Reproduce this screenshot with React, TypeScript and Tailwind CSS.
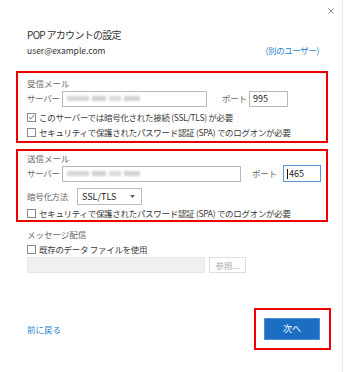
import { X } from "lucide-react";

const font = { fontFamily: '"Noto Sans CJK JP", "Noto Sans", sans-serif' };

const Check = ({ checked = false, label }: { checked?: boolean; label: string }) => (
  <div className="flex items-center h-[14px] gap-[3px]">
    <span className="w-[9px] h-[9px] border border-[#8a8a8a] bg-white flex items-center justify-center shrink-0">
      {checked && (
        <svg viewBox="0 0 10 10" className="w-[8px] h-[8px]">
          <path d="M1.5 5.2 L4 7.6 L8.6 2.2" fill="none" stroke="#444" strokeWidth="1.1" />
        </svg>
      )}
    </span>
    <span className="text-[8.5px] text-[#3a3a3a] tracking-[-0.3px] whitespace-nowrap">{label}</span>
  </div>
);

// blurred placeholder for the hidden server name
const Blurred = () => (
  <div className="flex items-center gap-[3px] h-full pl-[4px] blur-[0.8px]">
    <span className="w-[22px] h-[5px] bg-[#d6d6d6]" />
    <span className="w-[14px] h-[5px] bg-[#cfcfcf]" />
    <span className="w-[12px] h-[5px] bg-[#d9d9d9]" />
    <span className="w-[16px] h-[5px] bg-[#d2d2d2]" />
  </div>
);

const Label = ({ w, ml = "", children }: { w: string; ml?: string; children: string }) => (
  <span className={`${w} ${ml} shrink-0 whitespace-nowrap text-[8.5px] text-[#666] tracking-[-0.3px]`}>{children}</span>
);

export default function App() {
  return (
    <div className="w-[350px] h-[372px] bg-white flex" style={font}>
      <div className="w-[343px] h-full border-r border-[#ececec] flex flex-col">
        <div className="h-[20px] flex justify-end items-center pr-[6px] pt-[1px]">
          <X className="w-[10px] h-[10px] text-[#555]" strokeWidth={1.5} />
        </div>

        <div className="mt-[7px] pl-[27px] h-[16px] leading-[16px] text-[10px] text-[#333] tracking-[-0.7px]">
          POP アカウントの設定
        </div>
        <div className="flex justify-between items-center h-[14px] pl-[27px] pr-[23px]">
          <span className="text-[8.5px] text-[#333]">user@example.com</span>
          <span className="text-[8.5px] text-[#2a7fd0] tracking-[-0.4px]">(別のユーザー)</span>
        </div>

        {/* incoming */}
        <div className="mt-[14px] ml-[16px] w-[312px] border-2 border-[#ee0000] pl-[9px] pt-[3px] pb-[2px]">
          <div className="h-[14px] leading-[14px] text-[8.5px] text-[#666]">受信メール</div>
          <div className="flex items-center h-[17px]">
            <Label w="w-[35px]">サーバー</Label>
            <div className="w-[145px] h-[16px] shrink-0 border border-[#b8b8b8]">
              <Blurred />
            </div>
            <Label w="w-[27px]" ml="ml-[15px]">ポート</Label>
            <div className="w-[39px] h-[16px] shrink-0 border border-[#b8b8b8] text-[9px] text-[#222] pl-[3px] leading-[14px]">
              995
            </div>
          </div>
          <div className="mt-[3px]">
            <Check checked label="このサーバーでは暗号化された接続 (SSL/TLS) が必要" />
          </div>
          <div className="mt-[1px]">
            <Check label="セキュリティで保護されたパスワード認証 (SPA) でのログオンが必要" />
          </div>
        </div>

        {/* outgoing */}
        <div className="mt-[6px] ml-[16px] w-[312px] border-2 border-[#ee0000] pl-[9px]">
          <div className="h-[14px] leading-[14px] text-[8.5px] text-[#666]">送信メール</div>
          <div className="flex items-center h-[17px]">
            <Label w="w-[35px]">サーバー</Label>
            <div className="w-[179px] h-[16px] shrink-0 border border-[#b8b8b8]">
              <Blurred />
            </div>
            <Label w="w-[31px]" ml="ml-[11px]">ポート</Label>
            <div className="w-[38px] h-[17px] shrink-0 border border-[#5b9bd5] text-[9px] text-[#222] pl-[3px] flex items-center">
              <span className="w-px h-[10px] bg-[#111] mr-[1px]" />
              465
            </div>
          </div>
          <div className="mt-[6px] flex items-center h-[17px]">
            <Label w="w-[50px]">暗号化方法</Label>
            <div className="w-[65px] h-[17px] shrink-0 border border-[#bcbcbc] flex items-center justify-between pl-[4px] pr-[6px]">
              <span className="text-[9px] text-[#222]">SSL/TLS</span>
              <svg viewBox="0 0 6 4" className="w-[5px] h-[3px]">
                <path d="M0 0 L6 0 L3 4 Z" fill="#555" />
              </svg>
            </div>
          </div>
          <div className="mt-[1px]">
            <Check label="セキュリティで保護されたパスワード認証 (SPA) でのログオンが必要" />
          </div>
        </div>

        {/* delivery */}
        <div className="pl-[27px]">
          <div className="mt-[5px] h-[14px] leading-[14px] text-[8.5px] text-[#666]">メッセージ配信</div>
          <div className="mt-[1px]">
            <Check label="既存のデータ ファイルを使用" />
          </div>
          <div className="mt-[1px] flex gap-[4px]">
            <div className="w-[178px] h-[16px] bg-[#f0f0f0] border border-[#e6e6e6]" />
            <div className="w-[37px] h-[16px] border border-[#dedede] text-[8.5px] text-[#aaa] flex items-center justify-center">
              参照...
            </div>
          </div>
        </div>

        {/* footer */}
        <div className="mt-[35px] flex items-center justify-between pl-[27px] pr-[11px]">
          <span className="text-[8.5px] text-[#2a7fd0]">前に戻る</span>
          <div className="w-[77px] h-[42px] border-2 border-[#ee0000] p-[8px]">
            <div className="w-[56px] h-[22px] bg-[#1b6ec2] border border-[#4d8fd1] flex items-center justify-center text-[9px] text-white">
              次へ
            </div>
          </div>
        </div>
      </div>
    </div>
  );
}
